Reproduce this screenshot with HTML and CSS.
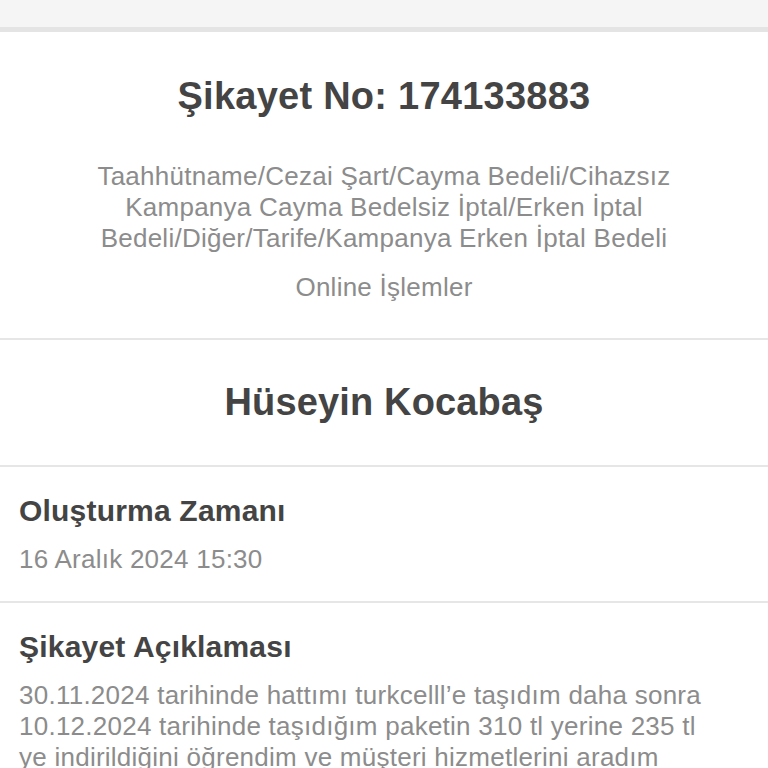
FILE: index.html
```html
<!DOCTYPE html>
<html lang="tr">
<head>
  <meta charset="UTF-8">
  <title>Şikayet Detayı</title>
  <meta name="viewport" content="width=device-width, initial-scale=1">
  <link rel="stylesheet" href="styles.css">
</head>
<body>
  <div class="topbar"></div>

  <section class="summary">
    <h1>Şikayet No: 174133883</h1>
    <p class="category">Taahhütname/Cezai Şart/Cayma Bedeli/Cihazsız Kampanya Cayma Bedelsiz İptal/Erken İptal Bedeli/Diğer/Tarife/Kampanya Erken İptal Bedeli</p>
    <p class="channel">Online İşlemler</p>
  </section>

  <section class="owner">
    <h2>Hüseyin Kocabaş</h2>
  </section>

  <section class="field">
    <h3>Oluşturma Zamanı</h3>
    <p>16 Aralık 2024 15:30</p>
  </section>

  <section class="field">
    <h3>Şikayet Açıklaması</h3>
    <p>30.11.2024 tarihinde hattımı turkcelll’e taşıdım daha sonra 10.12.2024 tarihinde taşıdığım paketin 310 tl yerine 235 tl ye indirildiğini öğrendim ve müşteri hizmetlerini aradım</p>
  </section>
</body>
</html>
```

FILE: styles.css
```css
body {
  margin: 0;
  background: #fff;
  font-family: "Liberation Sans", Arial, sans-serif;
  color: #444;
}
.topbar {
  height: 27px;
  background: #f5f5f5;
  border-bottom: 5px solid #e4e4e4;
}
h1, h2, h3, p {
  margin: 0;
}
p {
  letter-spacing: 0.25px;
}
.summary {
  padding: 41px 48px 35px 48px;
  text-align: center;
  border-bottom: 2px solid #e6e6e6;
}
.summary h1 {
  font-size: 38px;
  line-height: 46px;
  font-weight: bold;
  letter-spacing: 0.25px;
}
.category {
  margin-top: 42px;
  font-size: 26px;
  line-height: 31px;
  color: #8c8c8c;
}
.channel {
  margin-top: 18px;
  font-size: 26px;
  line-height: 31px;
  color: #8c8c8c;
}
.owner {
  padding: 39px 0 40px 0;
  text-align: center;
  border-bottom: 2px solid #e6e6e6;
}
.owner h2 {
  font-size: 38px;
  line-height: 46px;
  font-weight: bold;
  letter-spacing: 0.15px;
}
.field {
  padding: 26px 40px 26px 19px;
  border-bottom: 2px solid #e6e6e6;
}
.field h3 {
  font-size: 30px;
  line-height: 36px;
  font-weight: bold;
  letter-spacing: 0.2px;
}
.field p {
  margin-top: 15px;
  font-size: 26px;
  line-height: 31px;
  color: #8c8c8c;
}
```
